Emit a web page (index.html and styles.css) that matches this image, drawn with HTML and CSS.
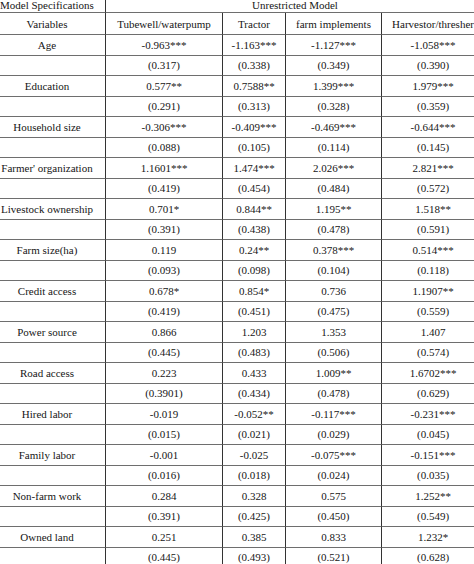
FILE: index.html
```html
<!DOCTYPE html>
<html>
<head>
<meta charset="utf-8">
<link rel="stylesheet" href="styles.css">
</head>
<body>
<div class="wrap">
<table class="results">
<colgroup>
<col class="c1"><col class="c2"><col class="c3"><col class="c4"><col class="c5">
</colgroup>
<tr class="top"><td class="spec">Model Specifications</td><td class="model" colspan="4">Unrestricted Model</td></tr>
<tr class="head"><td class="var">Variables</td><td>Tubewell/waterpump</td><td>Tractor</td><td>farm implements</td><td>Harvestor/thresher</td></tr>
<tr><td class="var">Age</td><td>-0.963***</td><td>-1.163***</td><td>-1.127***</td><td>-1.058***</td></tr>
<tr><td class="var"></td><td>(0.317)</td><td>(0.338)</td><td>(0.349)</td><td>(0.390)</td></tr>
<tr><td class="var">Education</td><td>0.577**</td><td>0.7588**</td><td>1.399***</td><td>1.979***</td></tr>
<tr><td class="var"></td><td>(0.291)</td><td>(0.313)</td><td>(0.328)</td><td>(0.359)</td></tr>
<tr><td class="var">Household size</td><td>-0.306***</td><td>-0.409***</td><td>-0.469***</td><td>-0.644***</td></tr>
<tr><td class="var"></td><td>(0.088)</td><td>(0.105)</td><td>(0.114)</td><td>(0.145)</td></tr>
<tr><td class="var">Farmer' organization</td><td>1.1601***</td><td>1.474***</td><td>2.026***</td><td>2.821***</td></tr>
<tr><td class="var"></td><td>(0.419)</td><td>(0.454)</td><td>(0.484)</td><td>(0.572)</td></tr>
<tr><td class="var">Livestock ownership</td><td>0.701*</td><td>0.844**</td><td>1.195**</td><td>1.518**</td></tr>
<tr><td class="var"></td><td>(0.391)</td><td>(0.438)</td><td>(0.478)</td><td>(0.591)</td></tr>
<tr><td class="var">Farm size(ha)</td><td>0.119</td><td>0.24**</td><td>0.378***</td><td>0.514***</td></tr>
<tr><td class="var"></td><td>(0.093)</td><td>(0.098)</td><td>(0.104)</td><td>(0.118)</td></tr>
<tr><td class="var">Credit access</td><td>0.678*</td><td>0.854*</td><td>0.736</td><td>1.1907**</td></tr>
<tr><td class="var"></td><td>(0.419)</td><td>(0.451)</td><td>(0.475)</td><td>(0.559)</td></tr>
<tr><td class="var">Power source</td><td>0.866</td><td>1.203</td><td>1.353</td><td>1.407</td></tr>
<tr><td class="var"></td><td>(0.445)</td><td>(0.483)</td><td>(0.506)</td><td>(0.574)</td></tr>
<tr><td class="var">Road access</td><td>0.223</td><td>0.433</td><td>1.009**</td><td>1.6702***</td></tr>
<tr><td class="var"></td><td>(0.3901)</td><td>(0.434)</td><td>(0.478)</td><td>(0.629)</td></tr>
<tr><td class="var">Hired labor</td><td>-0.019</td><td>-0.052**</td><td>-0.117***</td><td>-0.231***</td></tr>
<tr><td class="var"></td><td>(0.015)</td><td>(0.021)</td><td>(0.029)</td><td>(0.045)</td></tr>
<tr><td class="var">Family labor</td><td>-0.001</td><td>-0.025</td><td>-0.075***</td><td>-0.151***</td></tr>
<tr><td class="var"></td><td>(0.016)</td><td>(0.018)</td><td>(0.024)</td><td>(0.035)</td></tr>
<tr><td class="var">Non-farm work</td><td>0.284</td><td>0.328</td><td>0.575</td><td>1.252**</td></tr>
<tr><td class="var"></td><td>(0.391)</td><td>(0.425)</td><td>(0.450)</td><td>(0.549)</td></tr>
<tr><td class="var">Owned land</td><td>0.251</td><td>0.385</td><td>0.833</td><td>1.232*</td></tr>
<tr><td class="var"></td><td>(0.445)</td><td>(0.493)</td><td>(0.521)</td><td>(0.628)</td></tr>
</table>
</div>
</body>
</html>
```

FILE: styles.css
```css
html, body {
  margin: 0;
  padding: 0;
  background: #ffffff;
  overflow: hidden;
}

.wrap {
  width: 474px;
  height: 564px;
  overflow: hidden;
}

.results {
  border-collapse: separate;
  border-spacing: 0;
  table-layout: fixed;
  width: 484px;
  font-family: "Liberation Serif", "Times New Roman", serif;
  font-size: 11px;
  color: #161616;
}

.c1 { width: 105px; }
.c2 { width: 117px; }
.c3 { width: 63px; }
.c4 { width: 96px; }
.c5 { width: 103px; }

.results td {
  box-sizing: border-box;
  height: 20.5px;
  padding: 0;
  text-align: center;
  vertical-align: middle;
  white-space: nowrap;
  overflow: hidden;
  border-bottom: 1px solid #6e6e6e;
}

.results td + td {
  border-left: 1px solid #333333;
}

.results .var {
  padding-right: 11px;
}

.top td {
  height: 13px;
  line-height: 10px;
  vertical-align: top;
}

.results .spec {
  text-align: left;
  padding: 0;
}

.head td {
  height: 22px;
}
```
